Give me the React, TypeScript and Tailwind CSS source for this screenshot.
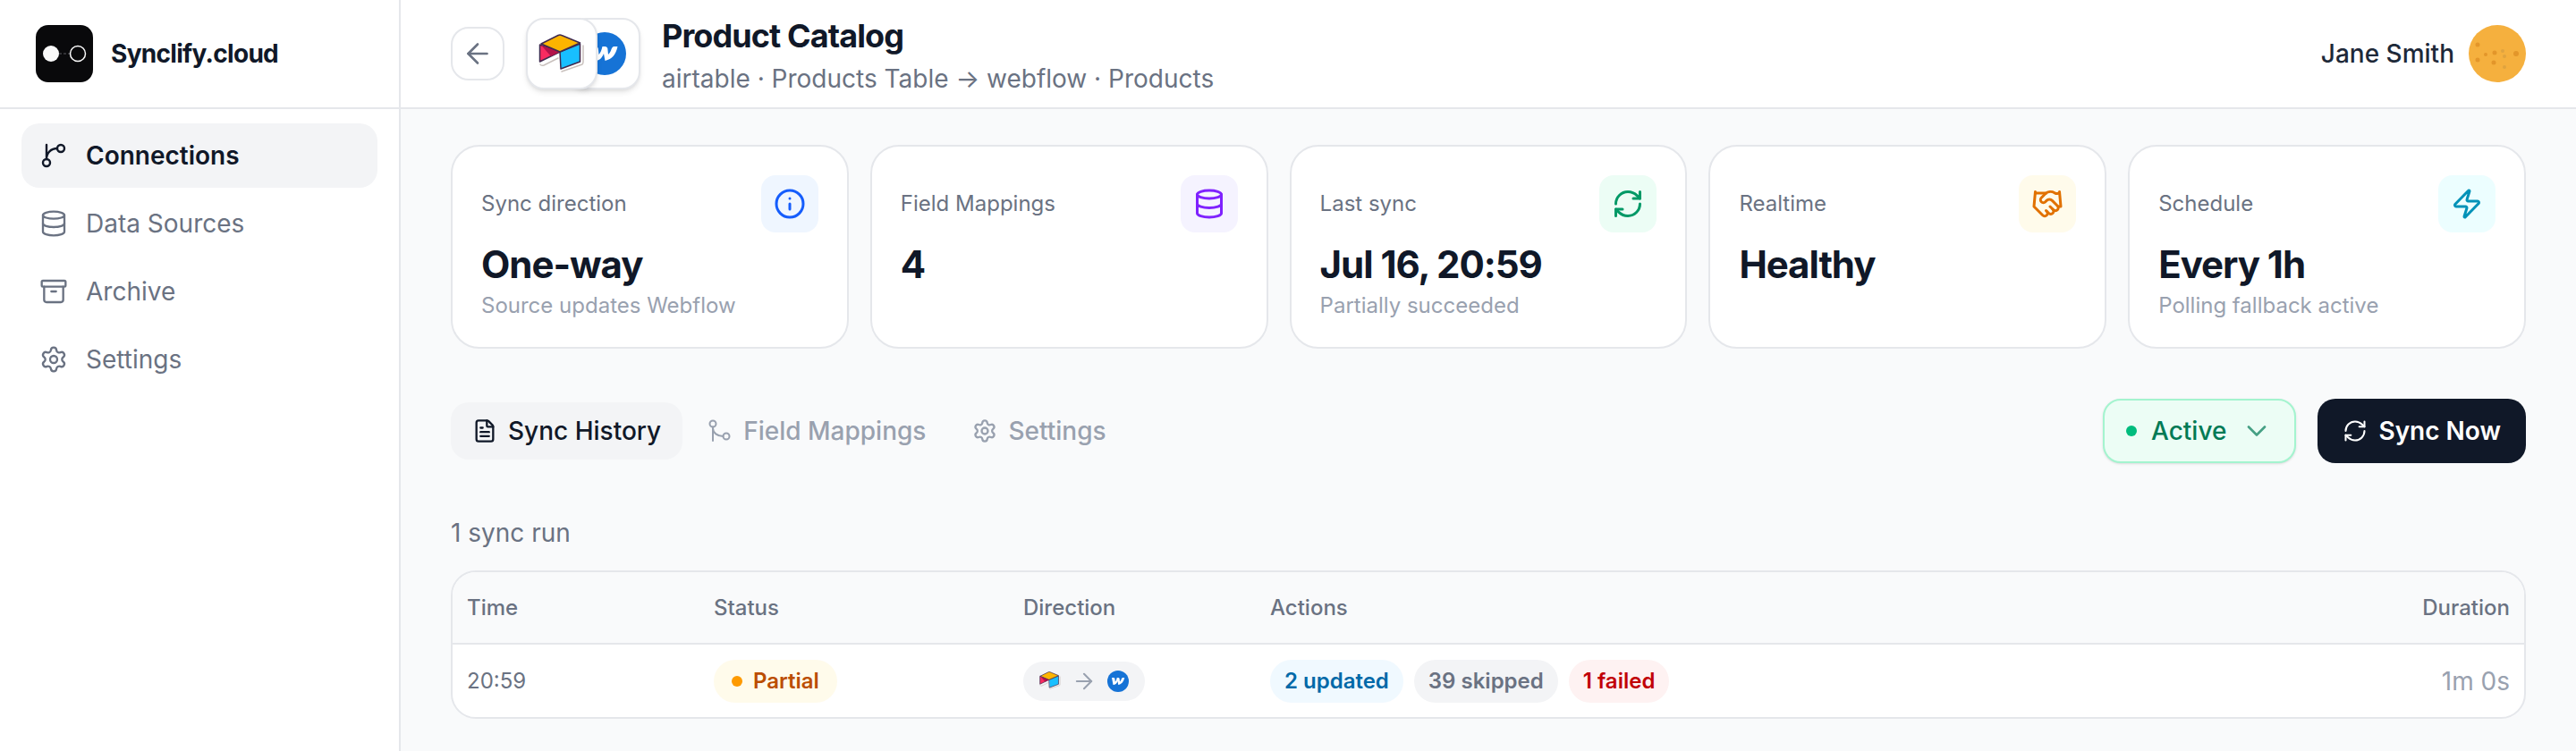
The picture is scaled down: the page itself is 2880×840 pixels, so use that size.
import {
  Archive,
  ArrowLeft,
  ArrowRight,
  ChevronDown,
  Database,
  FileText,
  Handshake,
  Info,
  RefreshCw,
  Settings,
  Zap,
} from "lucide-react";

const BranchIcon = ({ className }: { className?: string }) => (
  <svg viewBox="0 0 32 32" fill="none" stroke="currentColor" strokeWidth="2.4" strokeLinecap="round" className={className}>
    <path d="M8 4v16M8 20c0-7 5-12 12-12" />
    <circle cx="8" cy="24" r="4" />
    <circle cx="24" cy="8" r="4" />
  </svg>
);

const MergeIcon = ({ className }: { className?: string }) => (
  <svg viewBox="0 0 28 28" fill="none" stroke="currentColor" strokeWidth="2" strokeLinecap="round" className={className}>
    <circle cx="6" cy="6" r="3.5" />
    <circle cx="21" cy="20" r="3.5" />
    <path d="M6 9.500v15.500M6 11c0 5 5 9 11.500 9" />
  </svg>
);

const AirtableLogo = ({ className }: { className?: string }) => (
  <svg viewBox="0 0 52 44" strokeLinejoin="round" strokeLinecap="round" className={className}>
    <path d="M2 34q1 2 4 1l16-8M26 42l23-8q1-1 1-3V13" fill="none" stroke="#c9c1bd" strokeWidth="1.500" />
    <path d="M1.500 12v19l22.500-11Z" fill="#f82b60" stroke="#3f2a4f" strokeWidth="1.500" />
    <path d="M3 12.500 24 20l-10 5Z" fill="#b3134a" />
    <path d="M24 20 46.500 11v20L25 39Z" fill="#18bfff" stroke="#3f2a4f" strokeWidth="1.500" />
    <path d="M3 11 22 1.500q2-1 4 0L46.500 10 24 20Z" fill="#fcb400" stroke="#3f2a4f" strokeWidth="1.500" />
  </svg>
);

const WebflowLogo = ({ className }: { className?: string }) => (
  <svg viewBox="0 0 48 48" className={className}>
    <circle cx="24" cy="24" r="24" fill="#1673d6" />
    <path
      d="M10 16h3c3 0 4 1 4 4l.500 5c2-2 3-5 4-9h2c3 0 4 1 4 4l.500 5c2-2 3-4 3.500-6 1-2.500 2-3 4-3h3c-2 9-6 14-14 16l-1.500-8c-2 5-5 8-10 8Z"
      fill="#fff"
    />
  </svg>
);

const navItems = [
  { label: "Connections", icon: BranchIcon, active: true },
  { label: "Data Sources", icon: Database },
  { label: "Archive", icon: Archive },
  { label: "Settings", icon: Settings },
];

const stats = [
  { label: "Sync direction", value: "One-way", note: "Source updates Webflow", icon: Info, color: "bg-blue-50 text-blue-600" },
  { label: "Field Mappings", value: "4", note: "", icon: Database, color: "bg-violet-50 text-violet-600" },
  { label: "Last sync", value: "Jul 16, 20:59", note: "Partially succeeded", icon: RefreshCw, color: "bg-emerald-50 text-emerald-600" },
  { label: "Realtime", value: "Healthy", note: "", icon: Handshake, color: "bg-amber-50 text-amber-600" },
  { label: "Schedule", value: "Every 1h", note: "Polling fallback active", icon: Zap, color: "bg-cyan-50 text-cyan-600" },
];

const tabs = [
  { label: "Sync History", icon: FileText, active: true },
  { label: "Field Mappings", icon: MergeIcon },
  { label: "Settings", icon: Settings },
];

const Sidebar = () => (
  <aside className="w-[448px] shrink-0 border-r-2 border-gray-200 bg-white">
    <div className="flex h-[122px] items-center gap-5 border-b-2 border-gray-200 px-10">
      <svg viewBox="0 0 64 64" className="size-16">
        <rect width="64" height="64" rx="14" fill="#09090b" />
        <path d="M26 32h12" stroke="#3f3f46" strokeWidth="1.500" strokeDasharray="3 2" />
        <circle cx="17" cy="32" r="9" fill="#fafafa" />
        <circle cx="47" cy="32" r="8.500" fill="none" stroke="#fafafa" strokeWidth="1.500" />
      </svg>
      <span className="text-[28px] font-bold tracking-tight text-gray-900">Synclify.cloud</span>
    </div>
    <nav className="flex flex-col gap-1 px-6 py-4">
      {navItems.map(({ label, icon: Icon, active }) => (
        <a
          key={label}
          href="#"
          className={`flex h-[72px] items-center gap-5 rounded-[20px] px-5 text-[28px] ${
            active ? "bg-gray-100 font-semibold text-gray-900" : "text-gray-500"
          }`}>
          <Icon className="size-8" strokeWidth={1.75} />
          {label}
        </a>
      ))}
    </nav>
  </aside>
);

const Header = () => (
  <header className="flex h-[122px] items-center border-b-2 border-gray-200 bg-white px-14">
    <button aria-label="Back" className="flex size-[60px] items-center justify-center rounded-[20px] border-2 border-gray-200 text-gray-500">
      <ArrowLeft className="size-9" strokeWidth={1.75} />
    </button>
    <div className="ml-6 flex">
      <span className="z-10 flex size-20 items-center justify-center rounded-[20px] border-2 border-gray-200 bg-white shadow-md">
        <AirtableLogo className="w-[52px]" />
      </span>
      <span className="-ml-8 flex size-20 items-center justify-center rounded-[20px] border-2 border-gray-200 bg-white shadow-md">
        <WebflowLogo className="size-12" />
      </span>
    </div>
    <div className="ml-6 pt-2">
      <h1 className="text-[36px] leading-12 font-bold tracking-tight text-gray-900">Product Catalog</h1>
      <p className="text-[28px] leading-12 text-gray-500">airtable · Products Table → webflow · Products</p>
    </div>
    <div className="ml-auto flex items-center gap-4">
      <span className="text-[28px] font-medium text-gray-800">Jane Smith</span>
      <svg viewBox="0 0 64 64" className="size-16">
        <circle cx="32" cy="32" r="32" fill="#f5b03e" />
        <g fill="#e3962a">
          <circle cx="10" cy="22" r="2.500" />
          <circle cx="10" cy="39" r="2.500" />
          <circle cx="19" cy="33" r="2" />
          <circle cx="29" cy="31" r="2.500" />
          <circle cx="28" cy="42" r="2.500" />
          <circle cx="53" cy="32" r="3" />
        </g>
        <g fill="#dfa33f">
          <circle cx="38" cy="29" r="2" />
          <circle cx="40" cy="35" r="2" />
          <circle cx="40" cy="47" r="2" />
        </g>
      </svg>
    </div>
  </header>
);

const RunsTable = () => (
  <div className="mt-5 overflow-hidden rounded-[28px] border-2 border-gray-200 bg-white">
    <table className="w-full table-fixed text-left text-[24px]">
      <thead className="border-b-2 border-gray-200 bg-gray-50 text-gray-500">
        <tr className="h-20">
          <th className="w-[276px] px-4 font-medium">Time</th>
          <th className="w-[346px] px-4 font-medium">Status</th>
          <th className="w-[276px] px-4 font-medium">Direction</th>
          <th className="px-4 font-medium">Actions</th>
          <th className="w-[276px] px-4 text-right font-medium">Duration</th>
        </tr>
      </thead>
      <tbody>
        <tr className="h-[82px]">
          <td className="px-4 text-gray-500">20:59</td>
          <td className="px-4">
            <span className="flex h-12 w-fit items-center gap-3 rounded-full bg-amber-50 px-5 font-semibold text-amber-700">
              <span className="size-3 rounded-full bg-amber-500" />
              Partial
            </span>
          </td>
          <td className="px-4">
            <span className="flex h-11 w-fit items-center gap-3 rounded-full bg-gray-100 px-[18px]">
              <AirtableLogo className="w-6" />
              <ArrowRight className="size-7 text-gray-400" strokeWidth={1.75} />
              <WebflowLogo className="size-6" />
            </span>
          </td>
          <td className="px-4">
            <div className="flex gap-3 font-semibold">
              <span className="flex h-12 items-center rounded-full bg-sky-50 px-4 text-sky-700">2 updated</span>
              <span className="flex h-12 items-center rounded-full bg-gray-100 px-4 text-gray-500">39 skipped</span>
              <span className="flex h-12 items-center rounded-full bg-red-50 px-4 text-red-700">1 failed</span>
            </div>
          </td>
          <td className="px-4 text-right text-[28px] text-gray-400">1m 0s</td>
        </tr>
      </tbody>
    </table>
  </div>
);

const App = () => {
  return (
    <div className="flex min-h-screen bg-gray-50 font-['Inter',sans-serif]">
      <Sidebar />
      <div className="min-w-0 flex-1">
        <Header />
        <main className="px-14 pt-10 pb-8">
          <div className="grid grid-cols-5 gap-6">
            {stats.map(({ label, value, note, icon: Icon, color }) => (
              <section key={label} className="h-[228px] rounded-[32px] border-2 border-gray-200 bg-white p-8">
                <div className="flex items-center justify-between">
                  <h2 className="text-[24px] text-gray-500">{label}</h2>
                  <span className={`flex size-16 items-center justify-center rounded-[16px] ${color}`}>
                    <Icon className="size-9" />
                  </span>
                </div>
                <p className="mt-3 text-[42px] leading-12 font-bold tracking-tight text-gray-900">{value}</p>
                <p className="text-[24px] leading-11 text-gray-400">{note}</p>
              </section>
            ))}
          </div>
          <div className="mt-14 flex items-center justify-between">
            <div role="tablist" className="flex gap-1">
              {tabs.map(({ label, icon: Icon, active }) => (
                <button
                  key={label}
                  role="tab"
                  aria-selected={!!active}
                  className={`flex h-16 items-center gap-3 rounded-[20px] px-6 text-[28px] font-medium ${
                    active ? "bg-gray-100 text-gray-900" : "text-gray-400"
                  }`}>
                  <Icon className="size-7" />
                  {label}
                </button>
              ))}
            </div>
            <div className="flex gap-6">
              <button className="flex h-[72px] items-center rounded-[20px] border-2 border-emerald-200 bg-emerald-50 px-6 text-[28px] font-medium text-emerald-700 shadow-sm">
                <span className="mr-4 size-3 rounded-full bg-emerald-500" />
                Active
                <ChevronDown className="ml-4 size-9 opacity-70" strokeWidth={1.75} />
              </button>
              <button className="flex h-[72px] items-center gap-3 rounded-[20px] bg-gray-900 px-7 text-[28px] font-semibold text-white">
                <RefreshCw className="size-7" strokeWidth={1.75} />
                Sync Now
              </button>
            </div>
          </div>
          <p className="mt-14 text-[28px] leading-11 text-gray-500">1 sync run</p>
          <RunsTable />
        </main>
      </div>
    </div>
  );
};

export default App;
